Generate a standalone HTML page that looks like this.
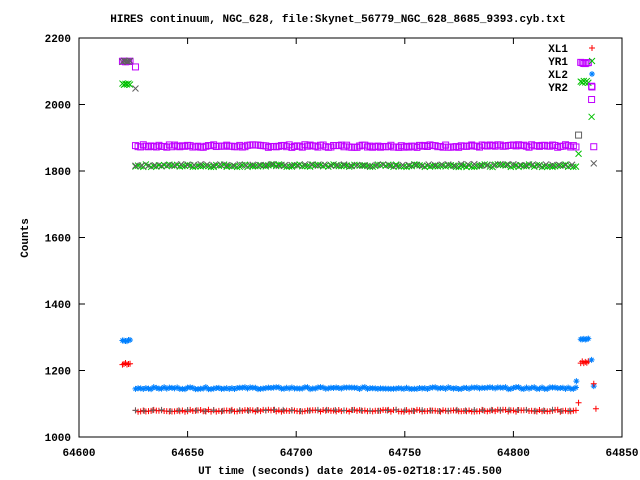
<!DOCTYPE html>
<html><head><meta charset="utf-8"><style>
html,body{margin:0;padding:0;background:#fff;width:640px;height:480px;overflow:hidden}
svg text{font-family:"Liberation Mono","DejaVu Sans Mono",monospace;font-size:11px;font-weight:bold;fill:#000}
</style></head><body>
<svg id="s" width="640" height="480" xmlns="http://www.w3.org/2000/svg">
<rect x="79" y="38" width="543" height="399" fill="none" stroke="#000" stroke-width="1"/>
<g id="ticks" stroke="#000"></g>
<g id="labels"></g>
<text x="338" y="22" text-anchor="middle">HIRES continuum, NGC_628, file:Skynet_56779_NGC_628_8685_9393.cyb.txt</text>
<text x="350" y="474" text-anchor="middle">UT time (seconds) date 2014-05-02T18:17:45.500</text>
<text transform="translate(28,238) rotate(-90)" text-anchor="middle">Counts</text>
<text x="568" y="52" text-anchor="end">XL1</text>
<text x="568" y="65" text-anchor="end">YR1</text>
<text x="568" y="78" text-anchor="end">XL2</text>
<text x="568" y="91" text-anchor="end">YR2</text>
<g id="pts" fill="none" stroke-width="1"></g>
</svg>
<script>
function X(t){return 79+(t-64600)*543/250}
function Y(v){return 437-(v-1000)*399/1200}
var tk=document.getElementById('ticks'),lb=document.getElementById('labels'),pts=document.getElementById('pts');
var h='',l='';
for(var v=1000;v<=2200;v+=200){var y=Y(v);h+='<line x1="79" y1="'+y+'" x2="85" y2="'+y+'"/><line x1="616" y1="'+y+'" x2="622" y2="'+y+'"/>';
l+='<text x="71" y="'+(y+4)+'" text-anchor="end">'+v+'</text>';}
for(var t=64600;t<=64850;t+=50){var x=X(t);h+='<line x1="'+x+'" y1="437" x2="'+x+'" y2="431"/><line x1="'+x+'" y1="38" x2="'+x+'" y2="44"/>';
l+='<text x="'+x+'" y="456" text-anchor="middle">'+t+'</text>';}
tk.innerHTML=h;lb.innerHTML=l;
var s=7;function r(){s=(s*9301+49297)%233280;return s/233280}
var out='';
function plus(x,y,c){out+='<path stroke="'+c+'" d="M'+(x-3)+' '+y+'h6M'+x+' '+(y-3)+'v6"/>'}
function cross(x,y,c){out+='<path stroke="'+c+'" d="M'+(x-3)+' '+(y-3)+'l6 6M'+(x-3)+' '+(y+3)+'l6 -6"/>'}
function star(x,y,c){out+='<path stroke="'+c+'" d="M'+(x-3)+' '+y+'h6M'+x+' '+(y-3)+'v6M'+(x-2)+' '+(y-2)+'l4 4M'+(x-2)+' '+(y+2)+'l4 -4"/>'}
function sq(x,y,c){out+='<rect stroke="'+c+'" x="'+(x-3)+'" y="'+(y-3)+'" width="6" height="6"/>'}
var R='#ff0000',G='#00c000',B='#0080ff',P='#c000ff',K='#606060';
function series(t0,t1,step,v,j,fn,c){for(var t=t0;t<=t1;t+=step){fn(X(t),Y(v+(r()-0.5)*j),c)}}
series(64620,64624,0.7,2130,4,sq,P);series(64620,64624,0.7,2130,4,cross,K);
series(64620,64624,0.7,2062,6,cross,G);
series(64620,64624,0.7,1290,4,star,B);series(64620,64624,0.7,1220,6,plus,R);
series(64626,64829,1.2,1875,8,sq,P);
series(64626,64829,1.2,1816,8,cross,G);series(64626,64829,3,1818,6,cross,K);
series(64626,64829,1.2,1147,6,star,B);
series(64626,64829,1.2,1079,6,plus,R);series(64626,64829,4,1080,4,plus,K);
series(64831,64835,0.7,2125,4,sq,P);series(64831,64835,0.7,2068,6,cross,G);
series(64831,64835,0.7,1295,4,star,B);series(64831,64835,0.7,1225,6,plus,R);
sq(X(64626),Y(2113),P);cross(X(64626),Y(2048),K);
sq(X(64830),Y(1908),K);cross(X(64830),Y(1852),G);
sq(X(64836),Y(2055),P);sq(X(64836),Y(2015),P);sq(X(64837),Y(1873),P);
cross(X(64836),Y(1963),G);cross(X(64837),Y(1823),K);
star(X(64829),Y(1168),B);star(X(64836),Y(1232),B);star(X(64837),Y(1153),B);
plus(X(64830),Y(1103),R);plus(X(64837),Y(1160),R);plus(X(64838),Y(1085),R);
plus(592,48,R);cross(592,61,G);star(592,74,B);sq(592,87,P);
pts.innerHTML=out;
</script>
</body></html>
